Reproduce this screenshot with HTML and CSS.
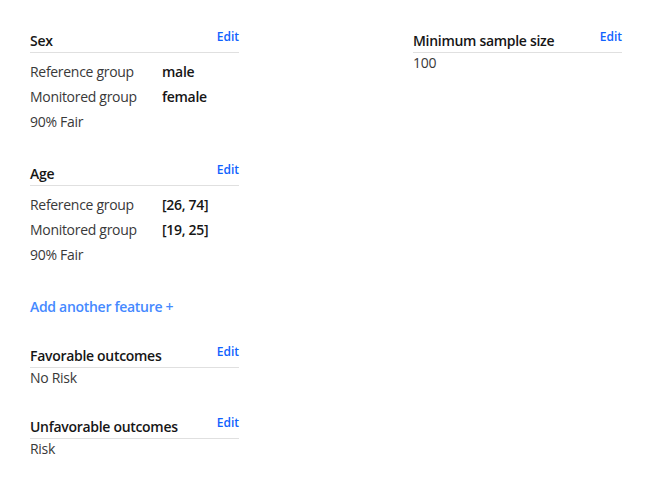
FILE: index.html
```html
<!DOCTYPE html>
<html>
<head>
<meta charset="utf-8">
<link rel="stylesheet" href="styles.css">
</head>
<body>
<div class="page">
  <div class="col">
    <section class="block">
      <div class="block-head"><span class="title">Sex</span><a class="edit">Edit</a></div>
      <div class="rows">
        <div class="row"><span class="label">Reference group</span><span class="value">male</span></div>
        <div class="row"><span class="label">Monitored group</span><span class="value">female</span></div>
        <div class="row"><span class="label">90% Fair</span></div>
      </div>
    </section>
    <section class="block block-feature">
      <div class="block-head"><span class="title">Age</span><a class="edit">Edit</a></div>
      <div class="rows">
        <div class="row"><span class="label">Reference group</span><span class="value">[26, 74]</span></div>
        <div class="row"><span class="label">Monitored group</span><span class="value">[19, 25]</span></div>
        <div class="row"><span class="label">90% Fair</span></div>
      </div>
    </section>
    <a class="add">Add another feature +</a>
    <section class="block">
      <div class="block-head"><span class="title">Favorable outcomes</span><a class="edit">Edit</a></div>
      <div class="plain">No Risk</div>
    </section>
    <section class="block">
      <div class="block-head"><span class="title">Unfavorable outcomes</span><a class="edit">Edit</a></div>
      <div class="plain">Risk</div>
    </section>
  </div>
  <div class="col">
    <section class="block">
      <div class="block-head"><span class="title">Minimum sample size</span><a class="edit">Edit</a></div>
      <div class="plain">100</div>
    </section>
  </div>
</div>
</body>
</html>
```
FILE: styles.css
```css
html, body {
  margin: 0;
  padding: 0;
  background: #ffffff;
}
body {
  font-family: "Open Sans", "Noto Sans", sans-serif;
  color: #393939;
  font-size: 14px;
  letter-spacing: -0.3px;
}
.page {
  display: flex;
  gap: 174px;
  padding: 32px 0 0 30px;
}
.col {
  width: 209px;
  display: flex;
  flex-direction: column;
  gap: 30px;
}
.block-feature {
  margin-top: 1px;
}
.block-head {
  display: flex;
  justify-content: space-between;
  align-items: flex-start;
  border-bottom: 1px solid #e0e0e0;
  padding-bottom: 2px;
}
.title {
  font-weight: 600;
  color: #161616;
  font-size: 14px;
  line-height: 18px;
}
.edit {
  font-size: 12px;
  font-weight: 600;
  color: #0f62fe;
  line-height: 14px;
  margin-top: -2px;
  letter-spacing: 0;
}
.rows {
  padding-top: 6px;
}
.row {
  display: flex;
  line-height: 25px;
}
.label {
  width: 132px;
}
.value {
  font-weight: 600;
  color: #161616;
}
.plain {
  line-height: 20px;
}
.add {
  font-weight: 600;
  color: #4589ff;
  line-height: 20px;
}
```
